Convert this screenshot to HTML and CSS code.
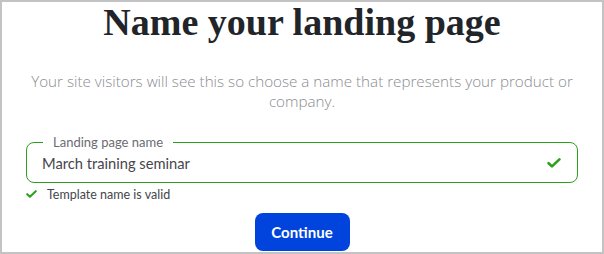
FILE: index.html
```html
<!DOCTYPE html>
<html lang="en">
<head>
<meta charset="utf-8">
<title>Name your landing page</title>
<link rel="stylesheet" href="styles.css">
</head>
<body>
<main class="frame">
  <h1 class="title">Name your landing page</h1>
  <p class="subtitle">Your site visitors will see this so choose a name that represents your product or company.</p>
  <div class="field">
    <span class="field-label">Landing page name</span>
    <span class="field-value">March training seminar</span>
    <svg class="check check-lg" viewBox="0 0 14 10" aria-hidden="true"><path d="M1.6 5.2 L5 8.4 L12.4 1.4"/></svg>
  </div>
  <div class="valid">
    <svg class="check check-sm" viewBox="0 0 14 10" aria-hidden="true"><path d="M1.6 5.2 L5 8.4 L12.4 1.4"/></svg>
    <span>Template name is valid</span>
  </div>
  <div class="actions">
    <button class="btn-primary" type="button">Continue</button>
  </div>
</main>
</body>
</html>
```

FILE: styles.css
```css
html, body {
  margin: 0;
  padding: 0;
  background: #ffffff;
}

.frame {
  box-sizing: border-box;
  width: 604px;
  height: 254px;
  border: 2px solid #c3c3c3;
  padding: 1px 24px 0;
  display: flex;
  flex-direction: column;
  overflow: hidden;
  font-family: Lato, "Noto Sans", sans-serif;
}

.title {
  margin: 0;
  font-family: "Liberation Serif", "Times New Roman", serif;
  font-weight: 700;
  font-size: 38px;
  line-height: 38px;
  color: #212428;
  text-align: center;
}

.subtitle {
  margin: 30px 0 0;
  font-family: "Open Sans", sans-serif;
  font-weight: 300;
  font-size: 15.2px;
  line-height: 20px;
  color: #8a8c91;
  text-align: center;
}

.field {
  position: relative;
  margin-top: 31px;
  height: 39px;
  border: 1px solid #2ca01c;
  border-radius: 8px;
  display: flex;
  align-items: center;
  justify-content: space-between;
  padding: 0 16px 0 15px;
}

.field-label {
  position: absolute;
  left: 16px;
  top: -8px;
  padding: 0 10px;
  background: #ffffff;
  font-size: 13px;
  line-height: 14px;
  color: #6b6c72;
}

.field-value {
  font-size: 14.7px;
  color: #45464a;
  margin-top: 1px;
}

.check {
  fill: none;
  stroke: #2ca01c;
  stroke-linecap: round;
  stroke-linejoin: round;
}

.check-lg {
  width: 14px;
  height: 10px;
  stroke-width: 2.6;
}

.check-sm {
  width: 11px;
  height: 8px;
  stroke-width: 2.6;
}

.valid {
  display: flex;
  align-items: center;
  gap: 10px;
  margin-top: 3px;
  height: 16px;
  font-size: 12.5px;
  color: #45464a;
}

.actions {
  display: flex;
  justify-content: center;
  margin-top: 11px;
}

.btn-primary {
  width: 95px;
  height: 38px;
  border: none;
  border-radius: 8px;
  background: #0044dd;
  color: #ffffff;
  font-family: Lato, "Noto Sans", sans-serif;
  font-weight: 700;
  font-size: 15px;
  padding: 0;
  cursor: pointer;
}
```
